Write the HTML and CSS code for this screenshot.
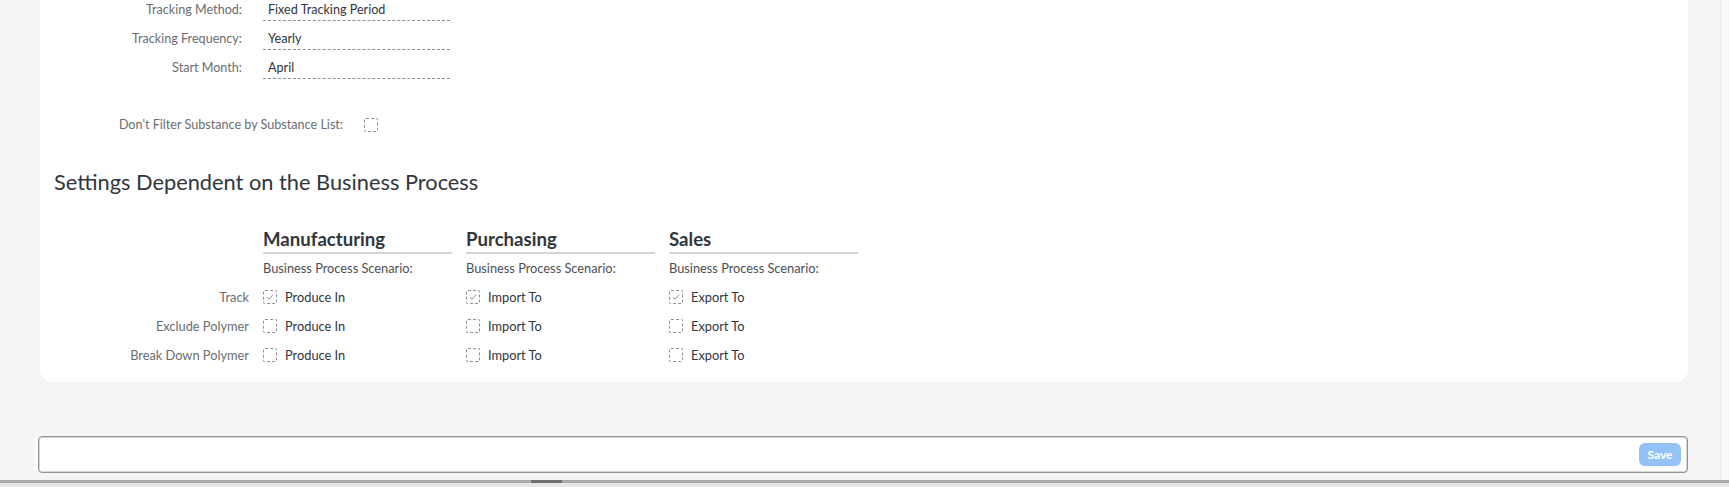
FILE: index.html
```html
<!DOCTYPE html>
<html lang="en">
<head>
<meta charset="utf-8">
<title>Settings</title>
<link rel="stylesheet" href="styles.css">
</head>
<body>
<div class="window">
  <div class="upper">
    <main class="main">
      <section class="card">
        <div class="form">
          <div class="label">Tracking Method:</div>
          <div class="field">Fixed Tracking Period</div>
          <div class="label">Tracking Frequency:</div>
          <div class="field">Yearly</div>
          <div class="label">Start Month:</div>
          <div class="field">April</div>
        </div>

        <div class="form-check">
          <div class="label">Don't Filter Substance by Substance List:</div>
          <span class="cb"></span>
        </div>

        <h2 class="title">Settings Dependent on the Business Process</h2>

        <div class="table">
          <div class="cell"></div>
          <div class="colhead">Manufacturing</div>
          <div class="colhead">Purchasing</div>
          <div class="colhead">Sales</div>

          <div class="cell"></div>
          <div class="cell sub">Business Process Scenario:</div>
          <div class="cell sub">Business Process Scenario:</div>
          <div class="cell sub">Business Process Scenario:</div>

          <div class="cell rowlabel">Track</div>
          <div class="cell"><span class="cb checked"><svg viewBox="0 0 14 14"><polyline points="3.5,7.2 6,9.6 10.5,4.2"/></svg></span><span class="txt">Produce In</span></div>
          <div class="cell"><span class="cb checked"><svg viewBox="0 0 14 14"><polyline points="3.5,7.2 6,9.6 10.5,4.2"/></svg></span><span class="txt">Import To</span></div>
          <div class="cell"><span class="cb checked"><svg viewBox="0 0 14 14"><polyline points="3.5,7.2 6,9.6 10.5,4.2"/></svg></span><span class="txt">Export To</span></div>

          <div class="cell rowlabel">Exclude Polymer</div>
          <div class="cell"><span class="cb"></span><span class="txt">Produce In</span></div>
          <div class="cell"><span class="cb"></span><span class="txt">Import To</span></div>
          <div class="cell"><span class="cb"></span><span class="txt">Export To</span></div>

          <div class="cell rowlabel">Break Down Polymer</div>
          <div class="cell"><span class="cb"></span><span class="txt">Produce In</span></div>
          <div class="cell"><span class="cb"></span><span class="txt">Import To</span></div>
          <div class="cell"><span class="cb"></span><span class="txt">Export To</span></div>
        </div>
      </section>

      <footer class="footer">
        <button class="save" type="button">Save</button>
      </footer>
    </main>
    <div class="vscroll"></div>
  </div>
  <div class="hscroll">
    <div class="htrack"><div class="hthumb"></div></div>
  </div>
</div>
</body>
</html>
```

FILE: styles.css
```css
* { box-sizing: border-box; }

html, body {
  margin: 0;
  padding: 0;
  width: 1729px;
  height: 487px;
  overflow: hidden;
  background: #f4f4f4;
  font-family: Lato, "Liberation Sans", Arial, sans-serif;
  color: #32363a;
}

.window {
  display: flex;
  flex-direction: column;
  height: 487px;
}

.upper {
  display: flex;
  flex: 1;
  min-height: 0;
}

.main {
  width: 1720px;
  display: flex;
  flex-direction: column;
  background: #f4f4f4;
}

.vscroll {
  width: 9px;
  background: #f8f8f8;
  border-left: 1px solid #ececec;
}

.card {
  margin-left: 40px;
  width: 1648px;
  background: #ffffff;
  border-radius: 0 0 12px 12px;
  padding: 0 0 13px 0;
}

.form {
  display: grid;
  grid-template-columns: 202px 187px;
  column-gap: 21px;
  row-gap: 8px;
}

.label {
  text-align: right;
  font-size: 12.6px;
  line-height: 20px;
  color: #6a6d70;
  white-space: nowrap;
}

.field {
  font-size: 12.6px;
  line-height: 20px;
  padding-left: 5px;
  border-bottom: 1px dashed #8c9196;
  color: #32363a;
}

.form-check {
  margin-top: 35px;
  display: grid;
  grid-template-columns: 303px 15px;
  column-gap: 21px;
  height: 21px;
  align-items: center;
}

.cb {
  display: inline-flex;
  width: 14px;
  height: 14px;
  border: 1px dashed #8c9196;
  border-radius: 2px;
  flex: none;
}

.cb svg {
  width: 12px;
  height: 12px;
  fill: none;
  stroke: #7d8287;
  stroke-width: 1;
}

.title {
  margin: 33px 0 0 14px;
  font-size: 21.8px;
  line-height: 28px;
  font-weight: 400;
  color: #32363a;
}

.table {
  margin-top: 31px;
  display: grid;
  grid-template-columns: 209px 189px 189px 189px;
  column-gap: 14px;
  grid-template-rows: 27px 28px;
  grid-auto-rows: 29px;
}

.colhead {
  font-size: 18.6px;
  font-weight: 700;
  line-height: 24px;
  color: #32363a;
  border-bottom: 2px solid #d3d5d7;
  padding-bottom: 1px;
}

.cell {
  display: flex;
  align-items: center;
  font-size: 12.8px;
  line-height: 20px;
  color: #32363a;
  white-space: nowrap;
}

.cell.sub {
  color: #4c5055;
}

.cell.rowlabel {
  justify-content: flex-end;
  color: #6a6d70;
}

.txt {
  margin-left: 8px;
}

.footer {
  margin-top: 54px;
  margin-left: 38px;
  width: 1650px;
  height: 37px;
  background: #ffffff;
  border: 1px solid #8e9399;
  box-shadow: inset 0 0 0 1px #d4d6d8, -3px 0 4px rgba(255,255,255,0.9);
  border-radius: 4px;
  display: flex;
  align-items: center;
  justify-content: flex-end;
  padding-right: 6px;
}

.save {
  width: 42px;
  height: 23px;
  border: none;
  border-radius: 6px;
  background: #93c2f6;
  color: #ffffff;
  font-family: Lato, "Liberation Sans", Arial, sans-serif;
  font-size: 12px;
  font-weight: 700;
  padding: 0;
}

.hscroll {
  height: 7px;
  background: #e6e6e6;
}

.htrack {
  height: 3px;
  background: #a9a9a9;
  display: flex;
}

.hthumb {
  margin-left: 531px;
  width: 31px;
  height: 3px;
  background: #6f6f6f;
}
```
